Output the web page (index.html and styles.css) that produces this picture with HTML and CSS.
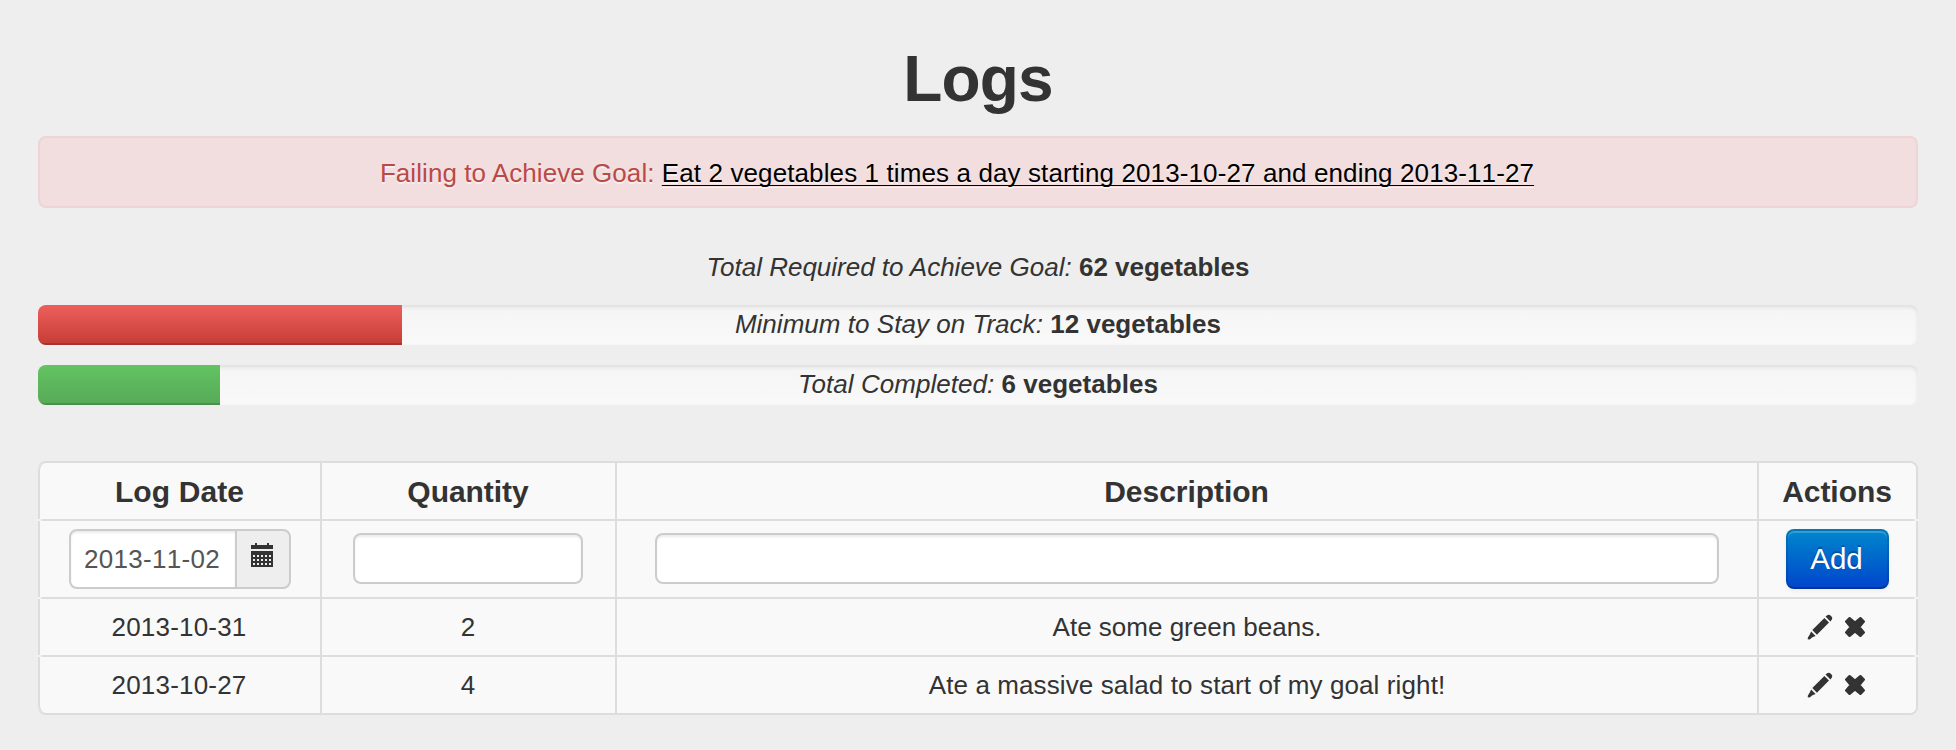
FILE: index.html
```html
<!DOCTYPE html>
<html lang="en">
<head>
<meta charset="utf-8">
<title>Logs</title>
<link rel="stylesheet" href="styles.css">
</head>
<body>
<svg class="symbols" aria-hidden="true">
  <symbol id="calendar" viewBox="0 0 24 26">
    <path fill="currentColor" d="M1 3h4V1h2v2h10V1h2v2h4v4H1zM1 9h22v16H1z"/>
    <path fill="#eee" d="M3 13h2v2H3zm4 0h2v2H7zm4 0h2v2h-2zm4 0h2v2h-2zm4 0h2v2h-2zM3 17h2v2H3zm4 0h2v2H7zm4 0h2v2h-2zm4 0h2v2h-2zm4 0h2v2h-2zM3 21h2v2H3zm4 0h2v2H7zm4 0h2v2h-2zm4 0h2v2h-2zm4 0h2v2h-2z"/>
  </symbol>
  <symbol id="pencil" viewBox="0 0 26 26">
    <path fill="currentColor" d="M20.600 1.100q1.600-1 2.900.4l1 1q1.400 1.300.4 2.900l-1.500 2.100-4.900-4.900zM17.400 4l4.600 4.600L9.900 20.700l-4.600-4.600zM4.100 17.400l4.500 4.500-3.200 1.300-2.700 2.300-2-.3.200-1.800 1.900-2.800z"/>
  </symbol>
  <symbol id="remove" viewBox="0 0 20 20">
    <path fill="currentColor" stroke="currentColor" stroke-width="2.400" stroke-linejoin="round" d="M4.600 1.200L10 5.700 15.400 1.200 18.800 4.600 14.300 10 18.800 15.400 15.400 18.800 10 14.300 4.600 18.800 1.200 15.400 5.700 10 1.200 4.600z"/>
  </symbol>
</svg>
<main class="page">
  <h1 class="title">Logs</h1>
  <div class="alert">Failing to Achieve Goal: <a class="goal-link" href="#">Eat 2 vegetables 1 times a day starting 2013-10-27 and ending 2013-11-27</a></div>
  <p class="total"><em>Total Required to Achieve Goal:</em> <strong>62 vegetables</strong></p>
  <div class="progress">
    <div class="bar bar-danger" style="width:19.355%"></div>
    <div class="caption"><em>Minimum to Stay on Track:</em> <strong>12 vegetables</strong></div>
  </div>
  <div class="progress">
    <div class="bar bar-success" style="width:9.677%"></div>
    <div class="caption"><em>Total Completed:</em> <strong>6 vegetables</strong></div>
  </div>
  <table class="logs">
    <colgroup><col class="col-date"><col class="col-quantity"><col><col class="col-actions"></colgroup>
    <thead>
      <tr><th>Log Date</th><th>Quantity</th><th>Description</th><th>Actions</th></tr>
    </thead>
    <tbody>
      <tr class="entry">
        <td><div class="date-picker"><input class="field date" type="text" value="2013-11-02"><span class="add-on"><svg class="icon-calendar"><use href="#calendar"/></svg></span></div></td>
        <td><input class="field quantity" type="text"></td>
        <td><input class="field description" type="text"></td>
        <td><button class="btn" type="button">Add</button></td>
      </tr>
      <tr>
        <td class="day">2013-10-31</td><td class="count">2</td><td>Ate some green beans.</td>
        <td><div class="actions"><svg class="icon-pencil"><use href="#pencil"/></svg><svg class="icon-remove"><use href="#remove"/></svg></div></td>
      </tr>
      <tr>
        <td class="day">2013-10-27</td><td class="count">4</td><td class="long">Ate a massive salad to start of my goal right!</td>
        <td><div class="actions"><svg class="icon-pencil"><use href="#pencil"/></svg><svg class="icon-remove"><use href="#remove"/></svg></div></td>
      </tr>
    </tbody>
  </table>
</main>
</body>
</html>
```
FILE: styles.css
```css
* { box-sizing: border-box; }
body {
  margin: 0;
  background: #eee;
  color: #333;
  font: 26px/36px "Liberation Sans", Arial, sans-serif;
  text-align: center;
}
.symbols { display: none; }
.page { padding: 39px 38px 0; }
.title { margin: 0 0 17px; font-size: 64px; line-height: 80px; letter-spacing: -.8px; }
.alert {
  height: 72px;
  padding: 17px 70px 15px 28px;
  border: 2px solid #eed3d7;
  border-radius: 8px;
  background: #f2dede;
  color: #b94a48;
  letter-spacing: .06px;
  text-shadow: 0 2px 0 rgba(255, 255, 255, .5);
}
.goal-link {
  color: #000;
  font-kerning: none;
  letter-spacing: .11px;
  text-decoration: underline;
  text-decoration-thickness: 1px;
  text-underline-offset: 3px;
  text-decoration-skip-ink: none;
}
.total { margin: 41px 0 20px; }
.progress {
  display: grid;
  height: 40px;
  margin-bottom: 20px;
  overflow: hidden;
  border-radius: 8px;
  background: linear-gradient(#f5f5f5, #f9f9f9);
  box-shadow: inset 0 2px 4px rgba(0, 0, 0, .1);
}
.bar, .caption { grid-area: 1 / 1; }
.caption { padding-top: 1px; letter-spacing: .03px; }
.bar { box-shadow: inset 0 -2px 0 rgba(0, 0, 0, .15); }
.bar-danger { background: linear-gradient(#ee5f5b, #c43c35); }
.bar-success { background: linear-gradient(#62c462, #57a957); }
.logs {
  width: 100%;
  margin-top: 56px;
  border: 2px solid #ddd;
  border-left: 0;
  border-radius: 8px;
  border-collapse: separate;
  border-spacing: 0;
  table-layout: fixed;
}
.col-date { width: 282px; }
.col-quantity { width: 295px; }
.col-actions { width: 159px; }
.logs th, .logs td {
  position: relative;
  height: 58px;
  padding: 0;
  border-top: 2px solid #ddd;
  border-left: 2px solid #ddd;
  background: #f9f9f9;
}
.logs th { height: 56px; padding: 1px 1px 0 0; border-top: 0; font-size: 30px; letter-spacing: -.05px; }
.logs .entry td { height: 78px; }
.logs th:first-child { border-top-left-radius: 8px; letter-spacing: .1px; }
.logs th:last-child { border-top-right-radius: 6px; }
.logs tr:last-child td:first-child { border-bottom-left-radius: 8px; }
.logs tr:last-child td:last-child { border-bottom-right-radius: 6px; }
/* Soft notches where the row rules meet the outer border */
.logs td:first-child::before, .logs td:last-child::after {
  content: "";
  position: absolute;
  top: -2px;
  width: 5px;
  height: 2px;
}
.logs td:first-child::before { left: -2px; background: linear-gradient(90deg, #f4f4f4 40%, #ddd); }
.logs td:last-child::after { right: -2px; background: linear-gradient(270deg, #f4f4f4 40%, #ddd); }
.logs .day { padding-right: 2px; font-kerning: none; letter-spacing: .2px; }
.logs .count { padding-right: 1px; }
.logs .long { font-kerning: none; letter-spacing: .11px; }
.field {
  display: block;
  height: 51px;
  margin: 0 auto 1px;
  padding: 0 13px;
  border: 2px solid #ccc;
  border-radius: 8px;
  background: #fff;
  color: #555;
  font: inherit;
  font-kerning: none;
  box-shadow: inset 0 2px 2px rgba(0, 0, 0, .075);
}
.date-picker { display: flex; justify-content: center; }
.date { width: 168px; height: 60px; margin: 0; border-radius: 8px 0 0 8px; letter-spacing: .3px; }
.add-on {
  width: 56px;
  height: 60px;
  margin-left: -2px;
  padding: 11px 2px 0 0;
  border: 2px solid #ccc;
  border-radius: 0 8px 8px 0;
  background: #eee;
  line-height: 0;
}
.icon-calendar { width: 24px; height: 26px; }
.quantity { width: 230px; margin-left: 31px; }
.description { width: 1064px; }
.btn {
  display: block;
  width: 103px;
  height: 60px;
  margin: 0 auto;
  padding: 0 2px 0 0;
  border: 2px solid;
  border-color: rgba(0, 0, 0, .1) rgba(0, 0, 0, .1) rgba(0, 0, 0, .25);
  border-radius: 8px;
  background: linear-gradient(#08c, #04c) border-box;
  color: #fff;
  font: 29.5px/40px "Liberation Sans", Arial, sans-serif;
  text-shadow: 0 -2px 0 rgba(0, 0, 0, .25);
  box-shadow: inset 0 2px 0 rgba(255, 255, 255, .2), 0 2px 4px rgba(0, 0, 0, .05);
}
.actions { display: flex; align-items: center; justify-content: center; gap: 12px; padding-right: 4px; }
.icon-pencil { width: 26px; height: 26px; }
.icon-remove { width: 20px; height: 20px; }
```
